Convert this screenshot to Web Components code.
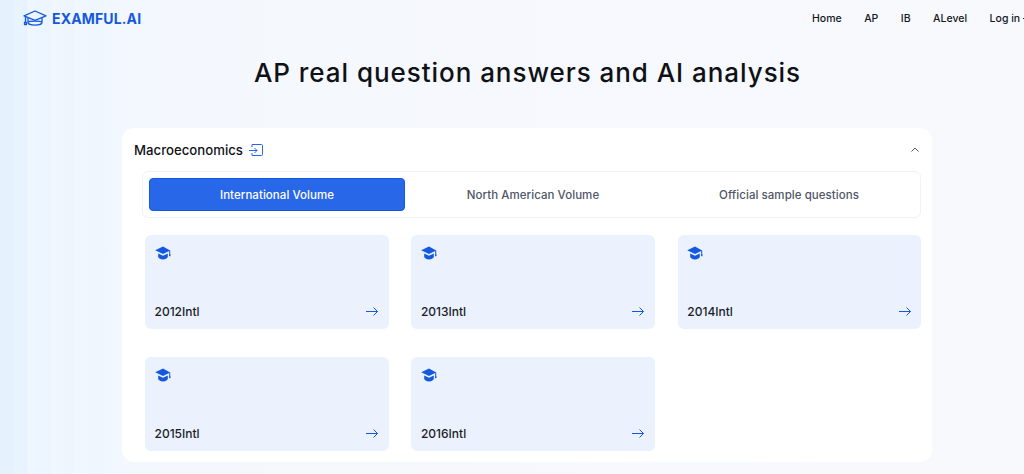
<!DOCTYPE html>
<html lang="en">
<head>
<meta charset="UTF-8">
<title>Examful.AI</title>
<style>
    html,body{margin:0;height:100%;}
    body{
        width:1024px;height:474px;overflow:hidden;
        font-family:Inter,"Liberation Sans",sans-serif;
        background:
            linear-gradient(90deg,#e4f2fe 0,#e4f2fe 14px,#e9f4fe 14px,#e6f3fe 27px,#eef6fe 28px,#ebf5fe 50px,#f0f7fe 51px,#edf5fe 74px,#f1f7fe 75px,#eef6fe 97px,#f3f8fe 122px,#f5f8fd 300px,#f7f9fd 1024px);
    }
</style>
</head>
<body>
<exam-page></exam-page>

<template id="cap-solid">
    <svg viewBox="0 0 16 14" width="16" height="14" fill="#1558e0"><path d="M8 .6 .2 4.300 8 8l6.200-3v3.600h1V4.400z"/><path d="M3.200 7.400v3.400c0 1.300 2.200 2.600 4.800 2.600s4.800-1.300 4.800-2.600V7.400L8 9.700z"/><rect x="14" y="8.200" width="1.500" height="2"/></svg>
</template>

<script>
    class ExamHeader extends HTMLElement
    {
        constructor()
        {
            super();
            this.shadow = this.attachShadow({mode:'open'})
            this.shadow.innerHTML = `
                <style>
                    :host{display:flex;align-items:center;justify-content:space-between;height:36px;padding-left:23px;}
                    .logo{display:flex;align-items:center;gap:5px;color:#1558e0;font-size:14px;font-weight:700;letter-spacing:.15px;}
                    svg{display:block;flex:none;}
                    nav{display:flex;gap:22.500px;font-size:10.500px;font-weight:500;color:#15171c;white-space:nowrap;width:212px;overflow:hidden;}
                    nav span{flex:none;}
                    .login{display:flex;align-items:center;gap:3px;}
                </style>
                <div class="logo">
                    <svg viewBox="0 0 24 16" width="24" height="16" fill="none" stroke="#1558e0" stroke-width="1.300" stroke-linejoin="round"><path d="M12 1 1 5.800 12 10.400 23 5.800z"/><path d="M5 8v4.600c0 1.400 3.200 2.600 7 2.600s7-1.200 7-2.600V8"/><path d="M5 12c2-1.200 12-1.200 14 0"/><path d="M2.500 6.800v5.700"/><rect x="1.500" y="12.500" width="2" height="2"/></svg>
                    <span>EXAMFUL.AI</span>
                </div>
                <nav>
                    <span>Home</span><span>AP</span><span>IB</span><span>ALevel</span>
                    <span class="login">Log in <svg viewBox="0 0 8 8" width="8" height="8" fill="none" stroke="#15171c" stroke-width="1"><path d="M0 4.500h7M4.500 2 7 4.500 4.500 7"/></svg></span>
                </nav>
            `
        }
    }
    customElements.define('exam-header',ExamHeader);

    class YearCard extends HTMLElement
    {
        constructor()
        {
            super();
            this.shadow = this.attachShadow({mode:'open'})
            this.shadow.innerHTML = `
                <style>
                    :host{display:flex;flex-direction:column;justify-content:space-between;height:93.500px;box-sizing:border-box;padding:11px 10.500px 10px 9.500px;background:#ebf1fd;border-radius:6px;}
                    .foot{display:flex;align-items:center;justify-content:space-between;font-size:12px;font-weight:450;color:#1b1e28;line-height:14px;}
                    svg{display:block;}
                </style>
                <div class="cap"></div>
                <div class="foot">
                    <span><slot></slot></span>
                    <svg viewBox="0 0 12 10" width="12" height="10" fill="none" stroke="#1558e0" stroke-width="1"><path d="M0 4.500h11.500M7.500 .5l4 4-4 4"/></svg>
                </div>
            `
            this.shadow.querySelector('.cap').append(document.getElementById('cap-solid').content.cloneNode(true))
        }
    }
    customElements.define('year-card',YearCard);

    class VolumeTabs extends HTMLElement
    {
        constructor()
        {
            super();
            this.shadow = this.attachShadow({mode:'open'})
            this.shadow.innerHTML = `
                <style>
                    :host{display:grid;grid-template-columns:repeat(3,256px);height:47px;box-sizing:border-box;padding:6px 3px 6px 6px;margin:0 11px 0 20px;border:1px solid #f0f2f6;border-radius:6px;}
                    div{display:flex;align-items:center;justify-content:center;font-size:11.500px;font-weight:450;letter-spacing:.05px;color:#4f5668;border-radius:4px;}
                    .on{background:#2867e8;border:1px solid #1558e0;color:#fff;}
                </style>
                <div class="on">International Volume</div>
                <div>North American Volume</div>
                <div>Official sample questions</div>
            `
        }
    }
    customElements.define('volume-tabs',VolumeTabs);

    class SubjectPanel extends HTMLElement
    {
        constructor()
        {
            super();
            this.shadow = this.attachShadow({mode:'open'})
            this.shadow.innerHTML = `
                <style>
                    :host{display:block;width:810px;height:334px;box-sizing:border-box;margin:0 0 0 122px;background:#fff;border-radius:12px;}
                    .top{display:flex;align-items:center;height:43px;padding:0 13px 0 12px;font-size:13.200px;font-weight:500;color:#111318;}
                    .top svg.go{margin-left:6px;}
                    .top svg.up{margin-left:auto;}
                    .grid{display:grid;grid-template-columns:repeat(3,243.600px);column-gap:22.800px;row-gap:28.500px;margin:17px 0 0 23px;}
                </style>
                <div class="top">
                    <span>Macroeconomics</span>
                    <svg class="go" viewBox="0 0 14 14" width="14" height="14" fill="none" stroke="#2867e8" stroke-width="1"><path d="M3 4V1.500h9.500a1 1 0 0 1 1 1v9a1 1 0 0 1-1 1H3V10"/><path d="M0 7.500h8M5.500 5 8 7.500 5.500 10"/></svg>
                    <svg class="up" viewBox="0 0 8 5" width="8" height="5" fill="none" stroke="#4f5668" stroke-width="1"><path d="M.5 4.500 4 1l3.500 3.500"/></svg>
                </div>
                <volume-tabs></volume-tabs>
                <div class="grid"><slot></slot></div>
            `
        }
    }
    customElements.define('subject-panel',SubjectPanel);

    class ExamPage extends HTMLElement
    {
        constructor()
        {
            super();
            this.shadow = this.attachShadow({mode:'open'})
            this.shadow.innerHTML = `
                <style>
                    :host{display:block;}
                    h1{margin:0;height:92px;box-sizing:border-box;padding-top:20px;padding-left:31px;text-align:center;font-size:26px;line-height:34px;font-weight:550;letter-spacing:.95px;color:#0f1115;}
                </style>
                <exam-header></exam-header>
                <h1>AP real question answers and AI analysis</h1>
                <subject-panel>
                    <year-card>2012Intl</year-card>
                    <year-card>2013Intl</year-card>
                    <year-card>2014Intl</year-card>
                    <year-card>2015Intl</year-card>
                    <year-card>2016Intl</year-card>
                </subject-panel>
            `
        }
    }
    customElements.define('exam-page',ExamPage);
</script>
</body>
</html>
